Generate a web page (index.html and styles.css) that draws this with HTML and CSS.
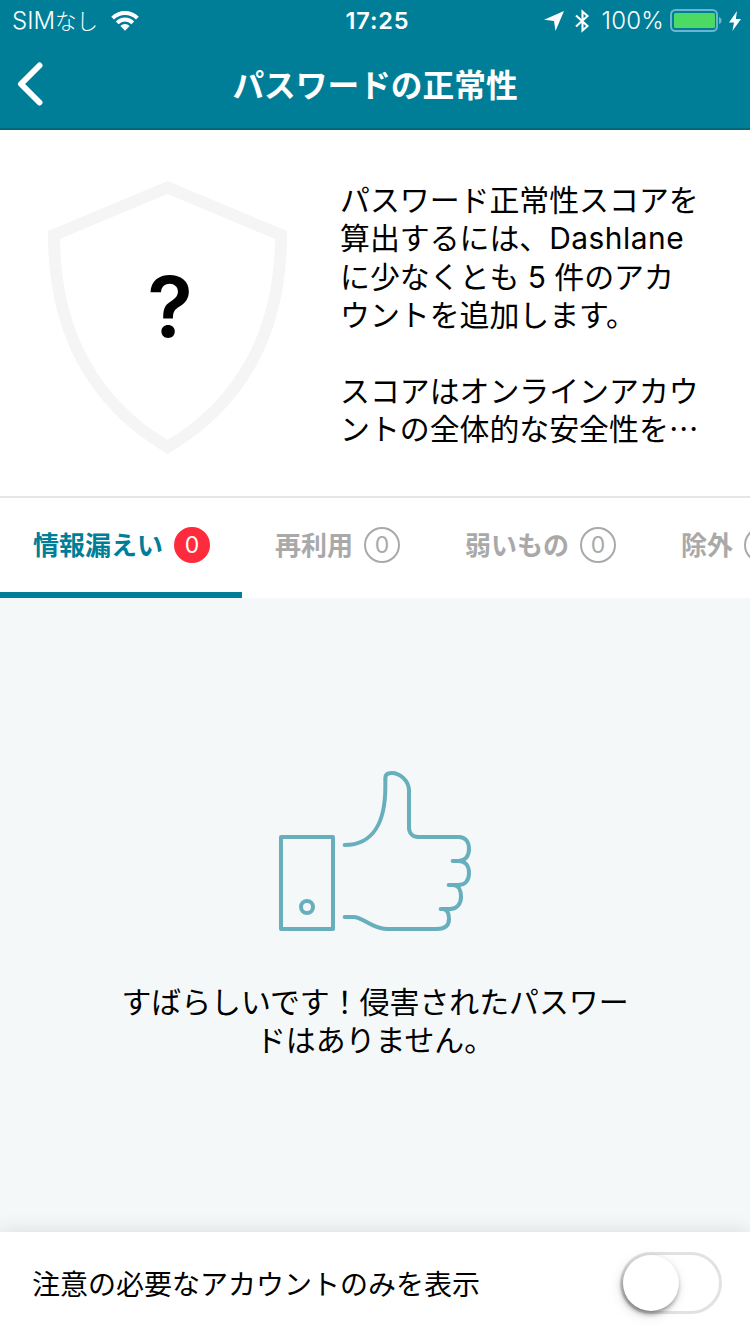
FILE: index.html
```html
<!DOCTYPE html>
<html lang="ja">
<head>
  <meta charset="utf-8">
  <title>パスワードの正常性</title>
  <link rel="stylesheet" href="styles.css">
</head>
<body>
<header>
  <div class="status-bar">
    <div class="status-left">
      <span>SIM<span class="kana">なし</span></span>
      <svg class="wifi" width="28" height="20" viewBox="0 0 28 20">
        <path d="M0.2 5.8 A19.5 19.5 0 0 1 27.8 5.8 L25 8.6 A15.5 15.5 0 0 0 3 8.6 Z" fill="#fff"/>
        <path d="M4.8 10.4 A13 13 0 0 1 23.2 10.4 L20.4 13.2 A9 9 0 0 0 7.6 13.2 Z" fill="#fff"/>
        <path d="M9.4 15 A6.5 6.5 0 0 1 18.6 15 L14 19.8 Z" fill="#fff"/>
      </svg>
    </div>
    <b class="clock">17:25</b>
    <div class="status-right">
      <svg width="20" height="20" viewBox="0 0 20 20"><path d="M20 0 L11.5 20 L10 10 L0 8.8 Z" fill="#fff"/></svg>
      <svg class="bluetooth" width="15" height="24" viewBox="0 0 15 24"><path d="M1 6.5 L12.5 17 L7.5 21.5 V2.5 L12.5 7 L1 17.5" fill="none" stroke="#fff" stroke-width="2.1"/></svg>
      <span class="percent">100%</span>
      <svg class="battery" width="53" height="24" viewBox="0 0 53 24">
        <rect x="1" y="1" width="46" height="21" rx="4.5" fill="none" stroke="#6cb5cf" stroke-width="2"/>
        <rect x="4" y="4" width="41" height="15" rx="1.5" fill="#4cd964"/>
        <path d="M49 8 C52.5 9 52.5 14 49 15 Z" fill="#6cb5cf"/>
      </svg>
      <svg class="bolt" width="12" height="20" viewBox="0 0 12 20"><path d="M8 0 L0 11.5 H5 L3.4 20 L12 8 H6.8 Z" fill="#fff"/></svg>
    </div>
  </div>
  <div class="nav">
    <svg class="back" width="28" height="44" viewBox="0 0 28 44"><path d="M22.5 3.5 L4 22 L22.5 40.5" fill="none" stroke="#fff" stroke-width="6" stroke-linecap="round" stroke-linejoin="round"/></svg>
    <h1>パスワードの正常性</h1>
  </div>
</header>

<section class="score">
  <div class="shield">
    <svg width="239" height="274" viewBox="0 0 239 274"><path d="M119.5 6.5 L6 54 C6 150 45 222 119.5 266 C194 222 233 150 233 54 Z" fill="none" stroke="#f5f5f5" stroke-width="12"/></svg>
    <span>?</span>
  </div>
  <div class="score-text">
    <p>パスワード正常性スコアを<br>算出するには、<span class="latin">Dashlane</span><br>に少なくとも 5 件のアカ<br>ウントを追加します。</p>
    <p>スコアはオンラインアカウ<br>ントの全体的な安全性を<span class="dots">…</span></p>
  </div>
</section>

<nav class="tabs">
  <div class="tab active"><span>情報漏えい</span><span class="badge">0</span></div>
  <div class="tab"><span>再利用</span><span class="badge">0</span></div>
  <div class="tab"><span>弱いもの</span><span class="badge">0</span></div>
  <div class="tab"><span>除外</span><span class="badge">0</span></div>
</nav>

<main>
  <svg width="196" height="162" viewBox="51 57 588 486" fill="none" stroke="#67afbd" stroke-width="12" stroke-linecap="round" stroke-linejoin="round">
    <rect x="63" y="261" width="156" height="276"/>
    <circle cx="141" cy="471" r="18"/>
    <path d="M254 285 C340 285 376 215 376 110 V84 C376 72 384 69 395 69 C420 69 447 92 447 122 V232 C447 250 458 261 475 261 H596 C616 261 627 275 627 297 C627 317 616 333 596 333 H578"/>
    <path d="M596 333 C616 333 627 348 627 369 C627 390 616 405 594 405 H566"/>
    <path d="M580 405 C596 405 603 421 603 441 C603 461 591 477 571 477 H542"/>
    <path d="M552 477 C562 480 567 492 567 507 C567 527 556 537 530 537 H380 C335 537 310 501 280 501 H254"/>
  </svg>
  <p>すばらしいです！侵害されたパスワー<br>ドはありません。</p>
</main>

<footer>
  <span>注意の必要なアカウントのみを表示</span>
  <div class="switch"><div class="knob"></div></div>
</footer>
</body>
</html>
```

FILE: styles.css
```css
* {
  box-sizing: border-box;
}
body {
  margin: 0;
  width: 750px;
  height: 1334px;
  display: flex;
  flex-direction: column;
  overflow: hidden;
  background-color: #fff;
  color: #000;
  font-family: Inter, "Noto Sans CJK JP", sans-serif;
}
p, h1 {
  margin: 0;
}
svg {
  display: block;
  flex: none;
}
header {
  height: 130px;
  background-color: #007e98;
  border-bottom: 2px solid #00697a;
  color: #fff;
}
.status-bar {
  height: 40px;
  display: grid;
  grid-template-columns: 1fr auto 1fr;
  align-items: center;
  padding: 1px 9px 0 12px;
  font-size: 24px;
  font-weight: 300;
  line-height: 39px;
}
.status-left, .status-right {
  display: flex;
  align-items: center;
}
.status-right {
  justify-content: flex-end;
}
.kana {
  font-size: 21.5px;
  line-height: 1;
}
.wifi {
  margin-left: 13px;
}
.clock {
  padding-left: 2px;
  font-size: 23.5px;
  font-weight: 600;
  letter-spacing: 0.9px;
}
.bluetooth {
  margin-left: 11px;
}
.percent {
  margin: 0 6px 0 12px;
  letter-spacing: 0.2px;
}
.bolt {
  margin-left: 6px;
}
.nav {
  height: 88px;
  display: grid;
  grid-template-columns: 60px 1fr 60px;
  align-items: center;
}
.back {
  margin-left: 17px;
}
.nav h1 {
  padding-top: 3px;
  font-size: 31.7px;
  font-weight: 600;
  line-height: 48px;
  text-align: center;
}
.score {
  height: 368px;
  display: flex;
  padding: 51px 48px 0;
  border-bottom: 2px solid #e3e5e6;
}
.shield {
  display: grid;
  width: 239px;
  height: 274px;
  margin-right: 53px;
}
.shield svg, .shield span {
  grid-area: 1 / 1;
}
.shield span {
  margin: 0 0 22px 5px;
  place-self: center;
  font-size: 84px;
  font-weight: 600;
  line-height: 84px;
}
.score-text {
  font-size: 29.9px;
  line-height: 38.3px;
  white-space: nowrap;
}
.score-text p + p {
  margin-top: 38px;
}
.latin {
  letter-spacing: 0.5px;
}
.dots {
  font-family: "Noto Sans CJK JP", sans-serif;
  line-height: 1;
}
.tabs {
  display: flex;
  height: 100px;
  overflow: hidden;
}
.tab {
  flex: none;
  display: flex;
  align-items: center;
  gap: 11px;
  padding: 0 32px 6px 33px;
  font-size: 26px;
  font-weight: 600;
  line-height: 36px;
  color: #a9a9a9;
}
.tab span:first-child {
  padding-top: 2px;
}
.tab.active {
  padding-bottom: 0;
  border-bottom: 6px solid #007e98;
  color: #007e98;
}
.badge {
  width: 36px;
  height: 36px;
  border: 2px solid #a9a9a9;
  border-radius: 50%;
  font-size: 23px;
  font-weight: 400;
  line-height: 33px;
  text-align: center;
}
.active .badge {
  border-color: #fe2b3c;
  background-color: #fe2b3c;
  color: #fff;
}
main {
  flex: 1;
  display: flex;
  flex-direction: column;
  align-items: center;
  padding-top: 171px;
  background-color: #f4f8f9;
}
main p {
  margin-top: 52px;
  font-size: 29.9px;
  line-height: 38.3px;
  text-align: center;
}
footer {
  height: 102px;
  display: flex;
  align-items: center;
  justify-content: space-between;
  padding: 0 28px 0 32px;
  background-color: #fff;
  box-shadow: 0 0 20px rgba(0, 0, 0, 0.12);
  font-size: 28px;
}
.switch {
  width: 102px;
  height: 62px;
  border: 3px solid #e2e2e2;
  border-radius: 31px;
}
.knob {
  width: 56px;
  height: 56px;
  border-radius: 50%;
  background-color: #fff;
  box-shadow: -1px 3px 5px rgba(0, 0, 0, 0.4), -2px 4px 14px rgba(0, 0, 0, 0.12);
}
```
